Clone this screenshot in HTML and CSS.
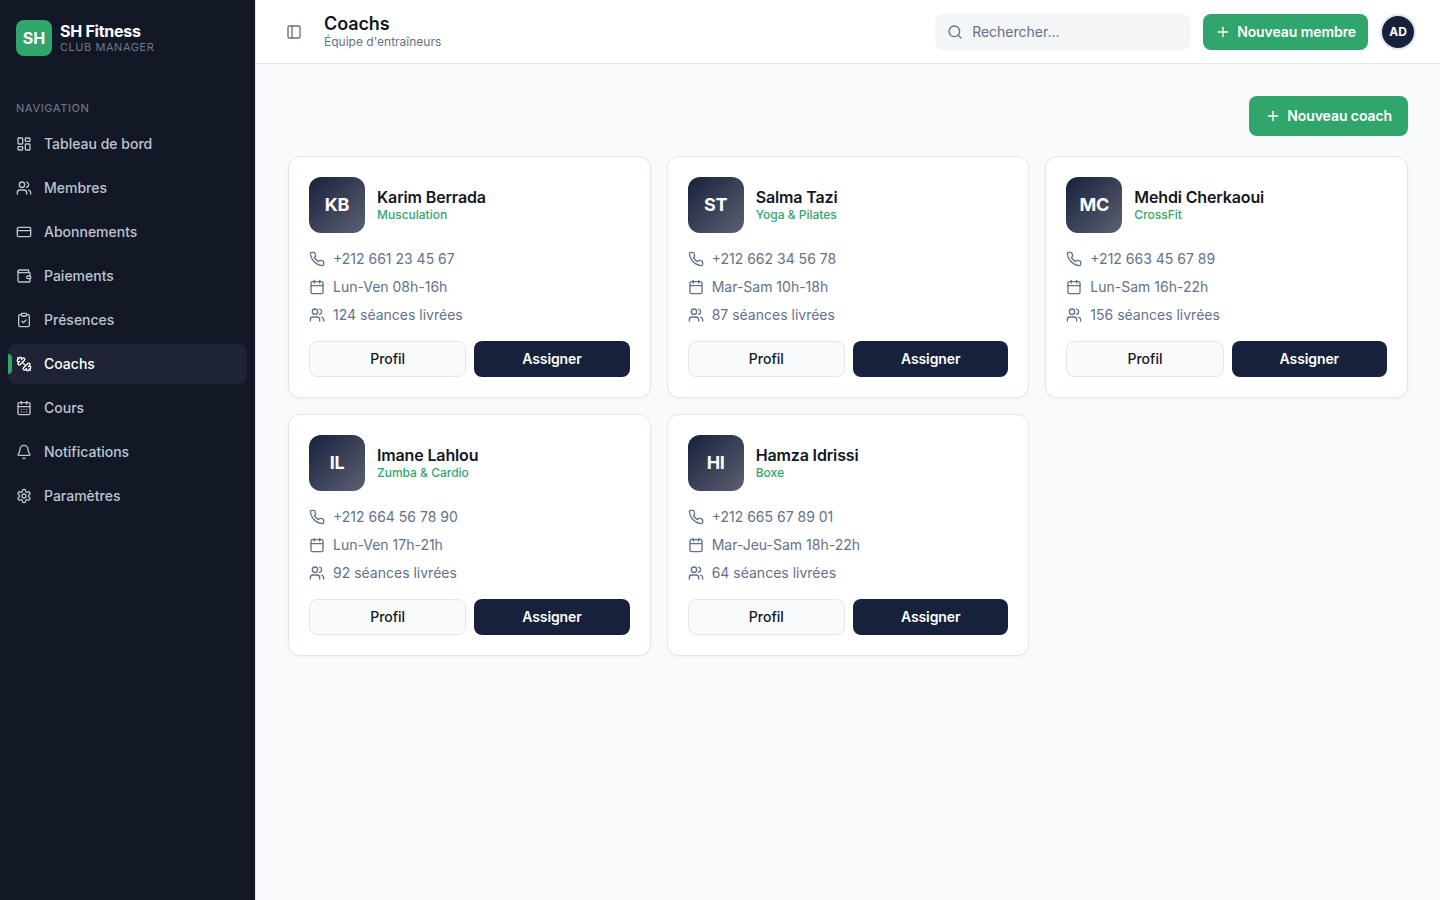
FILE: index.html
```html
<!DOCTYPE html>
<html lang="fr">
<head>
  <meta charset="UTF-8">
  <meta name="viewport" content="width=device-width, initial-scale=1.0">
  <title>Coachs | SH Fitness</title>
  <link rel="stylesheet" href="styles.css">
</head>
<body>
  <!-- Icons -->
  <svg class="sprite" aria-hidden="true">
    <symbol id="dashboard" viewBox="0 0 24 24"><rect width="7" height="9" x="3" y="3" rx="1"/><rect width="7" height="5" x="14" y="3" rx="1"/><rect width="7" height="9" x="14" y="12" rx="1"/><rect width="7" height="5" x="3" y="16" rx="1"/></symbol>
    <symbol id="users" viewBox="0 0 24 24"><path d="M16 21v-2a4 4 0 0 0-4-4H6a4 4 0 0 0-4 4v2"/><circle cx="9" cy="7" r="4"/><path d="M22 21v-2a4 4 0 0 0-3-3.87"/><path d="M16 3.13a4 4 0 0 1 0 7.75"/></symbol>
    <symbol id="card" viewBox="0 0 24 24"><rect width="20" height="14" x="2" y="5" rx="2"/><path d="M2 10h20"/></symbol>
    <symbol id="wallet" viewBox="0 0 24 24"><path d="M19 7V4a1 1 0 0 0-1-1H5a2 2 0 0 0 0 4h15a1 1 0 0 1 1 1v4h-3a2 2 0 0 0 0 4h3a1 1 0 0 0 1-1v-2a1 1 0 0 0-1-1"/><path d="M3 5v14a2 2 0 0 0 2 2h15a1 1 0 0 0 1-1v-4"/></symbol>
    <symbol id="clipboard" viewBox="0 0 24 24"><rect width="8" height="4" x="8" y="2" rx="1"/><path d="M16 4h2a2 2 0 0 1 2 2v14a2 2 0 0 1-2 2H6a2 2 0 0 1-2-2V6a2 2 0 0 1 2-2h2"/><path d="m9 14 2 2 4-4"/></symbol>
    <symbol id="dumbbell" viewBox="0 0 24 24"><path d="M14.4 14.4 9.6 9.6"/><path d="M18.657 21.485a2 2 0 1 1-2.829-2.828l-1.767 1.768a2 2 0 1 1-2.829-2.829l6.364-6.364a2 2 0 1 1 2.829 2.829l-1.768 1.767a2 2 0 1 1 2.828 2.829z"/><path d="m21.5 21.5-1.4-1.4"/><path d="M3.9 3.9 2.5 2.5"/><path d="M6.404 12.768a2 2 0 1 1-2.829-2.829l1.768-1.767a2 2 0 1 1-2.828-2.829l2.828-2.828a2 2 0 1 1 2.829 2.828l1.767-1.768a2 2 0 1 1 2.829 2.829z"/></symbol>
    <symbol id="calendar" viewBox="0 0 24 24"><path d="M8 2v4"/><path d="M16 2v4"/><rect width="18" height="18" x="3" y="4" rx="2"/><path d="M3 10h18"/></symbol>
    <symbol id="calendar-days" viewBox="0 0 24 24"><path d="M8 2v4"/><path d="M16 2v4"/><rect width="18" height="18" x="3" y="4" rx="2"/><path d="M3 10h18"/><path d="M8 14h.01"/><path d="M12 14h.01"/><path d="M16 14h.01"/><path d="M8 18h.01"/><path d="M12 18h.01"/><path d="M16 18h.01"/></symbol>
    <symbol id="bell" viewBox="0 0 24 24"><path d="M10.268 21a2 2 0 0 0 3.464 0"/><path d="M3.262 15.326A1 1 0 0 0 4 17h16a1 1 0 0 0 .74-1.673C19.41 13.956 18 12.499 18 8A6 6 0 0 0 6 8c0 4.499-1.411 5.956-2.738 7.326"/></symbol>
    <symbol id="settings" viewBox="0 0 24 24"><path d="M12.22 2h-.44a2 2 0 0 0-2 2v.18a2 2 0 0 1-1 1.73l-.43.25a2 2 0 0 1-2 0l-.15-.08a2 2 0 0 0-2.73.73l-.22.38a2 2 0 0 0 .73 2.73l.15.1a2 2 0 0 1 1 1.72v.51a2 2 0 0 1-1 1.74l-.15.09a2 2 0 0 0-.73 2.73l.22.38a2 2 0 0 0 2.73.73l.15-.08a2 2 0 0 1 2 0l.43.25a2 2 0 0 1 1 1.73V20a2 2 0 0 0 2 2h.44a2 2 0 0 0 2-2v-.18a2 2 0 0 1 1-1.73l.43-.25a2 2 0 0 1 2 0l.15.08a2 2 0 0 0 2.73-.73l.22-.39a2 2 0 0 0-.73-2.73l-.15-.08a2 2 0 0 1-1-1.74v-.5a2 2 0 0 1 1-1.74l.15-.09a2 2 0 0 0 .73-2.73l-.22-.38a2 2 0 0 0-2.73-.73l-.15.08a2 2 0 0 1-2 0l-.43-.25a2 2 0 0 1-1-1.73V4a2 2 0 0 0-2-2z"/><circle cx="12" cy="12" r="3"/></symbol>
    <symbol id="panel" viewBox="0 0 24 24"><rect width="18" height="18" x="3" y="3" rx="2"/><path d="M9 3v18"/></symbol>
    <symbol id="search" viewBox="0 0 24 24"><circle cx="11" cy="11" r="8"/><path d="m21 21-4.3-4.3"/></symbol>
    <symbol id="plus" viewBox="0 0 24 24"><path d="M5 12h14"/><path d="M12 5v14"/></symbol>
    <symbol id="phone" viewBox="0 0 24 24"><path d="M22 16.92v3a2 2 0 0 1-2.18 2 19.79 19.79 0 0 1-8.63-3.07 19.5 19.5 0 0 1-6-6 19.79 19.79 0 0 1-3.07-8.67A2 2 0 0 1 4.11 2h3a2 2 0 0 1 2 1.72 12.84 12.84 0 0 0 .7 2.81 2 2 0 0 1-.45 2.11L8.09 9.91a16 16 0 0 0 6 6l1.27-1.27a2 2 0 0 1 2.11-.45 12.84 12.84 0 0 0 2.81.7A2 2 0 0 1 22 16.92z"/></symbol>
  </svg>

  <div class="app">
    <aside class="sidebar">
      <div class="brand">
        <div class="brand-logo">SH</div>
        <div>
          <div class="brand-name">SH Fitness</div>
          <div class="brand-sub">Club Manager</div>
        </div>
      </div>
      <div class="nav-label">Navigation</div>
      <nav class="nav">
        <a class="nav-item"><svg class="icon"><use href="#dashboard"/></svg>Tableau de bord</a>
        <a class="nav-item"><svg class="icon"><use href="#users"/></svg>Membres</a>
        <a class="nav-item"><svg class="icon"><use href="#card"/></svg>Abonnements</a>
        <a class="nav-item"><svg class="icon"><use href="#wallet"/></svg>Paiements</a>
        <a class="nav-item"><svg class="icon"><use href="#clipboard"/></svg>Présences</a>
        <a class="nav-item active"><svg class="icon"><use href="#dumbbell"/></svg>Coachs</a>
        <a class="nav-item"><svg class="icon"><use href="#calendar-days"/></svg>Cours</a>
        <a class="nav-item"><svg class="icon"><use href="#bell"/></svg>Notifications</a>
        <a class="nav-item"><svg class="icon"><use href="#settings"/></svg>Paramètres</a>
      </nav>
    </aside>

    <div class="main">
      <header class="topbar">
        <button class="toggle" aria-label="Menu"><svg class="icon"><use href="#panel"/></svg></button>
        <div class="page-title">
          <h1>Coachs</h1>
          <p>Équipe d'entraîneurs</p>
        </div>
        <label class="search">
          <svg class="icon"><use href="#search"/></svg>
          <input type="text" placeholder="Rechercher...">
        </label>
        <button class="btn-green"><svg class="icon"><use href="#plus"/></svg>Nouveau membre</button>
        <div class="user">AD</div>
      </header>

      <main class="content">
        <div class="actions">
          <button class="btn-green large"><svg class="icon"><use href="#plus"/></svg>Nouveau coach</button>
        </div>

        <div class="grid">
          <article class="card">
            <div class="card-head">
              <div class="avatar">KB</div>
              <div>
                <h3>Karim Berrada</h3>
                <p class="speciality">Musculation</p>
              </div>
            </div>
            <ul class="infos">
              <li><svg class="icon"><use href="#phone"/></svg>+212 661 23 45 67</li>
              <li><svg class="icon"><use href="#calendar"/></svg>Lun-Ven 08h-16h</li>
              <li><svg class="icon"><use href="#users"/></svg>124 séances livrées</li>
            </ul>
            <div class="card-btns">
              <button class="btn-light">Profil</button>
              <button class="btn-dark">Assigner</button>
            </div>
          </article>

          <article class="card">
            <div class="card-head">
              <div class="avatar">ST</div>
              <div>
                <h3>Salma Tazi</h3>
                <p class="speciality">Yoga &amp; Pilates</p>
              </div>
            </div>
            <ul class="infos">
              <li><svg class="icon"><use href="#phone"/></svg>+212 662 34 56 78</li>
              <li><svg class="icon"><use href="#calendar"/></svg>Mar-Sam 10h-18h</li>
              <li><svg class="icon"><use href="#users"/></svg>87 séances livrées</li>
            </ul>
            <div class="card-btns">
              <button class="btn-light">Profil</button>
              <button class="btn-dark">Assigner</button>
            </div>
          </article>

          <article class="card">
            <div class="card-head">
              <div class="avatar">MC</div>
              <div>
                <h3>Mehdi Cherkaoui</h3>
                <p class="speciality">CrossFit</p>
              </div>
            </div>
            <ul class="infos">
              <li><svg class="icon"><use href="#phone"/></svg>+212 663 45 67 89</li>
              <li><svg class="icon"><use href="#calendar"/></svg>Lun-Sam 16h-22h</li>
              <li><svg class="icon"><use href="#users"/></svg>156 séances livrées</li>
            </ul>
            <div class="card-btns">
              <button class="btn-light">Profil</button>
              <button class="btn-dark">Assigner</button>
            </div>
          </article>

          <article class="card">
            <div class="card-head">
              <div class="avatar">IL</div>
              <div>
                <h3>Imane Lahlou</h3>
                <p class="speciality">Zumba &amp; Cardio</p>
              </div>
            </div>
            <ul class="infos">
              <li><svg class="icon"><use href="#phone"/></svg>+212 664 56 78 90</li>
              <li><svg class="icon"><use href="#calendar"/></svg>Lun-Ven 17h-21h</li>
              <li><svg class="icon"><use href="#users"/></svg>92 séances livrées</li>
            </ul>
            <div class="card-btns">
              <button class="btn-light">Profil</button>
              <button class="btn-dark">Assigner</button>
            </div>
          </article>

          <article class="card">
            <div class="card-head">
              <div class="avatar">HI</div>
              <div>
                <h3>Hamza Idrissi</h3>
                <p class="speciality">Boxe</p>
              </div>
            </div>
            <ul class="infos">
              <li><svg class="icon"><use href="#phone"/></svg>+212 665 67 89 01</li>
              <li><svg class="icon"><use href="#calendar"/></svg>Mar-Jeu-Sam 18h-22h</li>
              <li><svg class="icon"><use href="#users"/></svg>64 séances livrées</li>
            </ul>
            <div class="card-btns">
              <button class="btn-light">Profil</button>
              <button class="btn-dark">Assigner</button>
            </div>
          </article>
        </div>
      </main>
    </div>
  </div>
</body>
</html>
```
FILE: styles.css
```css
* {
  box-sizing: border-box;
  margin: 0;
  padding: 0;
}
body {
  font-family: 'Inter', sans-serif;
  font-size: 14px;
  line-height: 20px;
  background: #f9fafc;
  color: #131722;
}
button {
  font: inherit;
  border: none;
  cursor: pointer;
}
.sprite {
  display: none;
}
.icon {
  width: 16px;
  height: 16px;
  flex-shrink: 0;
  fill: none;
  stroke: currentColor;
  stroke-width: 2;
  stroke-linecap: round;
  stroke-linejoin: round;
}
.app {
  display: flex;
  min-height: 100vh;
}

/* Sidebar */
.sidebar {
  width: 256px;
  flex-shrink: 0;
  background: #121826;
  border-right: 1px solid #e2e6ee;
}
.brand {
  display: flex;
  align-items: center;
  gap: 8px;
  padding: 20px 16px;
}
.brand-logo {
  width: 36px;
  height: 36px;
  border-radius: 8px;
  background: #30a66d;
  color: #fff;
  font-size: 16px;
  font-weight: 700;
  line-height: 36px;
  text-align: center;
}
.brand-name {
  padding-top: 2px;
  color: #fff;
  font-size: 16px;
  font-weight: 700;
  line-height: 16px;
  letter-spacing: -0.25px;
}
.brand-sub {
  color: #717784;
  font-size: 11px;
  line-height: 16px;
  letter-spacing: 0.55px;
  text-transform: uppercase;
}
.nav-label {
  height: 48px;
  padding: 16px 16px 0;
  color: #6a717e;
  font-size: 11px;
  font-weight: 500;
  line-height: 32px;
  letter-spacing: 0.55px;
  text-transform: uppercase;
}
.nav {
  display: flex;
  flex-direction: column;
  gap: 4px;
  padding: 0 8px;
}
.nav-item {
  position: relative;
  display: flex;
  align-items: center;
  gap: 12px;
  height: 40px;
  padding: 0 8px;
  border-radius: 8px;
  color: #bcc5d2;
  font-weight: 500;
}
.nav-item.active {
  background: #1e2435;
  color: #fff;
}
.nav-item.active::before {
  content: '';
  position: absolute;
  left: 0;
  top: 10px;
  width: 4px;
  height: 20px;
  border-radius: 0 4px 4px 0;
  background: #30a66d;
}

/* Top bar */
.main {
  flex: 1;
}
.topbar {
  display: flex;
  align-items: center;
  gap: 12px;
  height: 64px;
  padding: 0 24px;
  background: #fff;
  border-bottom: 1px solid #e2e6ee;
}
.toggle {
  display: flex;
  align-items: center;
  justify-content: center;
  width: 28px;
  height: 28px;
  background: none;
  color: #64718a;
}
.page-title {
  flex: 1;
  margin-left: 4px;
  padding-bottom: 2px;
}
h1 {
  font-size: 18px;
  font-weight: 600;
  line-height: 21px;
  letter-spacing: -0.1px;
}
.page-title p {
  color: #64718a;
  font-size: 12px;
  line-height: 15px;
}
.search {
  display: flex;
  align-items: center;
  gap: 9px;
  width: 256px;
  height: 36px;
  padding: 0 12px;
  border-radius: 8px;
  background: #f3f5f7;
  color: #64718a;
}
.search input {
  width: 100%;
  border: none;
  outline: none;
  background: none;
  font: inherit;
}
.search input::placeholder {
  color: #64718a;
}
.btn-green {
  display: flex;
  align-items: center;
  gap: 6px;
  height: 36px;
  padding: 0 12px;
  border-radius: 8px;
  background: #30a66d;
  color: #fff;
  font-weight: 600;
  letter-spacing: -0.08px;
}
.btn-green.large {
  height: 40px;
  padding: 0 16px;
}
.user {
  width: 36px;
  height: 36px;
  border: 2px solid #e2e6ee;
  border-radius: 50%;
  background: #17213b;
  color: #fff;
  font-size: 12px;
  font-weight: 700;
  line-height: 32px;
  text-align: center;
}

/* Coaches */
.content {
  padding: 32px;
}
.actions {
  display: flex;
  justify-content: flex-end;
  margin-bottom: 20px;
}
.grid {
  display: grid;
  grid-template-columns: repeat(3, 1fr);
  gap: 16px;
}
.card {
  padding: 20px;
  background: #fff;
  border: 1px solid #e2e6ee;
  border-radius: 12px;
  box-shadow: 0 1px 2px rgba(23, 33, 59, 0.05);
}
.card-head {
  display: flex;
  align-items: center;
  gap: 12px;
  margin-bottom: 16px;
}
.avatar {
  width: 56px;
  height: 56px;
  border-radius: 12px;
  background: linear-gradient(135deg, #17213b, #5c6174);
  color: #fff;
  font-size: 18px;
  font-weight: 700;
  line-height: 56px;
  letter-spacing: -0.3px;
  text-align: center;
}
h3 {
  font-size: 16px;
  font-weight: 600;
  line-height: 20px;
  letter-spacing: -0.14px;
}
.speciality {
  color: #30a66d;
  font-size: 12px;
  font-weight: 500;
  line-height: 16px;
}
.infos {
  display: flex;
  flex-direction: column;
  gap: 8px;
  margin-bottom: 16px;
  list-style: none;
  color: #64718a;
}
.infos li {
  display: flex;
  align-items: center;
  gap: 8px;
}
.card-btns {
  display: flex;
  gap: 8px;
}
.card-btns button {
  flex: 1;
  height: 36px;
  border-radius: 8px;
}
.btn-light {
  background: #f9fafc;
  border: 1px solid #e2e6ee;
  color: #131722;
  font-weight: 500;
}
.btn-dark {
  background: #17213b;
  color: #fff;
  font-weight: 600;
  letter-spacing: -0.1px;
}
```
